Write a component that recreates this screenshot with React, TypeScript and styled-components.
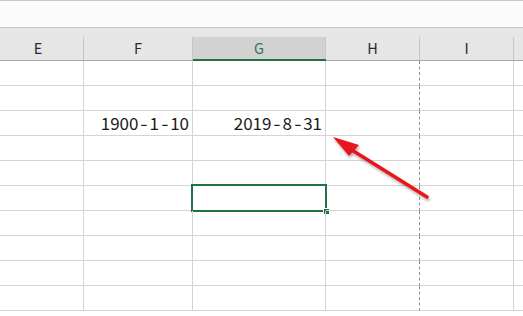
import React from "react";
import styled, { createGlobalStyle } from "styled-components";

const Global = createGlobalStyle`
  html, body { margin: 0; padding: 0; background: #ffffff; }
  body { width: 523px; height: 316px; overflow: hidden; }
`;

const Page = styled.div`
  position: relative;
  width: 523px;
  height: 316px;
  overflow: hidden;
  font-family: "Noto Sans CJK SC", "Microsoft YaHei", sans-serif;
`;

const FormulaBar = styled.div`
  height: 26px;
  border-top: 1px solid #c8c8c8;
  border-bottom: 1px solid #c6c6c6;
  background: #fbfbfb;
`;

const Sheet = styled.div`
  display: grid;
  grid-template-columns: 84px 109px 133px 94px 94px 1fr;
`;

const HeaderCell = styled.div<{ $selected?: boolean }>`
  height: 33px;
  box-sizing: border-box;
  background: #e6e6e6;
  border-bottom: ${(p) => (p.$selected ? "2px solid #217346" : "1px solid #a9a9a9")};
  display: flex;
  align-items: flex-end;
`;

const HeaderLabel = styled.div<{ $selected?: boolean; $last?: boolean; $shift?: number }>`
  flex: 1;
  height: ${(p) => (p.$selected ? "22px" : "23px")};
  box-sizing: border-box;
  padding-right: ${(p) => p.$shift ?? 0}px;
  border-right: ${(p) => (p.$last ? "none" : "1px solid #c6c6c6")};
  background: ${(p) => (p.$selected ? "#d2d2d2" : "#e6e6e6")};
  color: ${(p) => (p.$selected ? "#3b7052" : "#2b2b2b")};
  font-family: "Noto Sans CJK SC", sans-serif;
  font-size: 14.5px;
  line-height: 22px;
  text-align: center;
`;

const Cell = styled.div<{ $pageBreak?: boolean; $last?: boolean }>`
  position: relative;
  height: 25px;
  box-sizing: border-box;
  border-bottom: 1px solid #d4d4d4;
  border-right: ${(p) =>
    p.$last ? "none" : p.$pageBreak ? "1px dashed #8c8c8c" : "1px solid #d4d4d4"};
  font-size: 17px;
  line-height: 24px;
  color: #1a1a1a;
  text-align: right;
  padding-right: 3px;
  white-space: nowrap;
`;

const Dash = styled.span`
  display: inline-block;
  margin: 0 2.6px;
  transform: scaleX(1.25);
`;

const Selection = styled.div`
  position: absolute;
  left: -2px;
  top: -2px;
  right: -2px;
  bottom: -2px;
  border: 2px solid #217346;
  pointer-events: none;
`;

const FillHandle = styled.div`
  position: absolute;
  right: -4px;
  bottom: -4px;
  width: 5px;
  height: 5px;
  background: #217346;
  border: 1px solid #ffffff;
  border-right: none;
  border-bottom: none;
`;

const ArrowLayer = styled.svg`
  position: absolute;
  left: 0;
  top: 0;
  pointer-events: none;
`;

const cols = ["E", "F", "G", "H", "I", ""];
const rowCount = 10;

const data: Record<string, string> = {
  "2-1": "1900-1-10",
  "2-2": "2019-8-31",
};

function DateText({ value }: { value: string }) {
  const parts = value.split("-");
  return (
    <>
      {parts.map((p, i) => (
        <React.Fragment key={i}>
          {i > 0 && <Dash>-</Dash>}
          {p}
        </React.Fragment>
      ))}
    </>
  );
}

export default function App() {
  return (
    <Page>
      <Global />
      <FormulaBar />
      <Sheet>
        {cols.map((c, i) => (
          <HeaderCell key={c + i} $selected={i === 2}>
            <HeaderLabel $selected={i === 2} $last={i === cols.length - 1} $shift={i === 0 ? 7 : 0}>
              {c}
            </HeaderLabel>
          </HeaderCell>
        ))}
        {Array.from({ length: rowCount }).map((_, r) =>
          cols.map((_c, ci) => {
            const v = data[`${r}-${ci}`];
            return (
              <Cell key={`${r}-${ci}`} $pageBreak={ci === 3} $last={ci === cols.length - 1}>
                {v && <DateText value={v} />}
                {r === 5 && ci === 2 && (
                  <Selection>
                    <FillHandle />
                  </Selection>
                )}
              </Cell>
            );
          })
        )}
      </Sheet>
      <ArrowLayer width="523" height="316" viewBox="0 0 523 316">
        <defs>
          <filter id="sh" x="-20%" y="-20%" width="140%" height="140%">
            <feGaussianBlur in="SourceAlpha" stdDeviation="1.6" />
            <feOffset dx="1" dy="1.5" result="b" />
            <feComponentTransfer>
              <feFuncA type="linear" slope="0.35" />
            </feComponentTransfer>
            <feMerge>
              <feMergeNode />
              <feMergeNode in="SourceGraphic" />
            </feMerge>
          </filter>
        </defs>
        <g filter="url(#sh)">
          <line x1="427" y1="197" x2="347" y2="147" stroke="#e8131a" strokeWidth="3.4" strokeLinecap="round" />
          <polygon points="333,137 359,145 349,156" fill="#e8131a" />
        </g>
      </ArrowLayer>
    </Page>
  );
}
